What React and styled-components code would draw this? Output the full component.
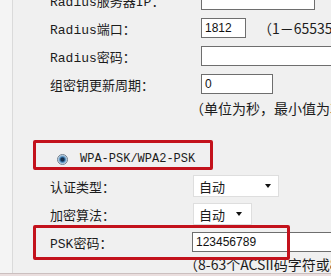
import React from 'react'
import styled, { createGlobalStyle } from 'styled-components'

const GlobalStyle = createGlobalStyle`
  html, body {
    margin: 0;
    padding: 0;
    background: #f4f4f4;
  }
  body {
    font-family: "Liberation Mono", "Noto Sans CJK SC", monospace;
    color: #1c1c1c;
  }
`

const Page = styled.div`
  width: 331px;
  height: 276px;
  overflow: hidden;
  display: flex;
  flex-direction: column;
  background: #f4f4f4;
`

const Panel = styled.div`
  flex: 1;
  min-height: 0;
  margin-left: 12px;
  padding-left: 37px;
  border-left: 1px solid #dadada;
  background: #f0f0f0;
  display: flex;
  flex-direction: column;
  overflow: hidden;
`

const Footer = styled.div`
  flex-shrink: 0;
  height: 2px;
  border-top: 1px solid #cbbfbf;
  background: #eadede;
`

const Section = styled.div`
  flex-shrink: 0;
  display: flex;
  flex-direction: column;
  margin-top: ${(p) => p.$top || 0}px;
`

const Row = styled.div`
  position: relative;
  flex-shrink: 0;
  display: flex;
  align-items: center;
  height: ${(p) => p.$h || 28}px;
`

const Label = styled.div`
  flex-shrink: 0;
  width: ${(p) => p.$w}px;
  font-size: 13px;
  white-space: nowrap;
`

const TextInput = styled.div`
  flex-shrink: 0;
  box-sizing: border-box;
  width: ${(p) => p.$w}px;
  height: 20px;
  padding-left: 3px;
  border: 1px solid #6e6e6e;
  background: #fff;
  display: flex;
  align-items: center;
  font: 12px "Liberation Sans", Arial, sans-serif;
  color: #111;
`

const Hint = styled.span`
  margin-left: ${(p) => p.$gap || 0}px;
  font: 14px "Noto Sans CJK SC", sans-serif;
  white-space: nowrap;
`

const Note = styled.div`
  flex-shrink: 0;
  height: ${(p) => p.$h}px;
  padding-left: ${(p) => p.$indent}px;
  display: flex;
  align-items: center;
  font: 14px/16px "Noto Sans CJK SC", sans-serif;
  white-space: nowrap;
`

const Select = styled.div`
  flex-shrink: 0;
  box-sizing: border-box;
  width: ${(p) => p.$w}px;
  height: 22px;
  margin-left: 1px;
  padding: 0 ${(p) => p.$pr}px 0 5px;
  border: 1px solid #dedede;
  background: #fff;
  display: flex;
  align-items: center;
  justify-content: space-between;
  font: 13px "Noto Sans CJK SC", sans-serif;
`

const Arrow = styled.span`
  width: 0;
  height: 0;
  border-left: 3px solid transparent;
  border-right: 3px solid transparent;
  border-top: 4px solid #111;
`

const Radio = styled.span`
  flex-shrink: 0;
  box-sizing: border-box;
  width: 11px;
  height: 11px;
  margin-left: 7px;
  margin-right: 12px;
  border-radius: 50%;
  border: 1px solid #71808f;
  background: radial-gradient(circle at 50% 50%, #15304d 0 1.6px, #3f7fb4 2.6px, #bcd3e6 4.2px, #f4f8fb 5px);
`

const RadioText = styled.span`
  font-size: 12px;
  white-space: nowrap;
`

const Mark = styled.div`
  position: absolute;
  left: ${(p) => p.$x}px;
  top: ${(p) => p.$y}px;
  width: ${(p) => p.$w}px;
  height: ${(p) => p.$h}px;
  box-sizing: border-box;
  border: 3px solid #c3121c;
  border-radius: 2px;
  pointer-events: none;
`

export default function App() {
  return (
    <>
      <GlobalStyle />
      <Page>
        <Panel>
          <Section $top={-14}>
            <Row>
              <Label $w={151}>Radius服务器IP：</Label>
              <TextInput $w={114} />
            </Row>
            <Row>
              <Label $w={151}>Radius端口：</Label>
              <TextInput $w={45}>1812</TextInput>
              <Hint $gap={12}>（1－65535）</Hint>
            </Row>
            <Row>
              <Label $w={151}>Radius密码：</Label>
              <TextInput $w={200} />
            </Row>
            <Row>
              <Label $w={151}>组密钥更新周期：</Label>
              <TextInput $w={72}>0</TextInput>
            </Row>
          </Section>
          <Note $h={20} $indent={140}>（单位为秒，最小值为30，不更新则为0）</Note>

          <Row $h={20} style={{ marginTop: 31 }}>
            <Radio />
            <RadioText>WPA-PSK/WPA2-PSK</RadioText>
            <Mark $x={-17} $y={-9} $w={180} $h={30} />
          </Row>

          <Section $top={3}>
            <Row>
              <Label $w={142}>认证类型：</Label>
              <Select $w={86} $pr={7}>
                自动
                <Arrow />
              </Select>
            </Row>
            <Row>
              <Label $w={142}>加密算法：</Label>
              <Select $w={59} $pr={9}>
                自动
                <Arrow />
              </Select>
            </Row>
            <Row>
              <Label $w={142}>PSK密码：</Label>
              <TextInput $w={200}>123456789</TextInput>
              <Mark $x={-17} $y={-3} $w={257} $h={35} />
            </Row>
            <Note $h={16} $indent={134}>（8-63个ACSII码字符或8-64个十六进制字符）</Note>
          </Section>
        </Panel>
        <Footer />
      </Page>
    </>
  )
}
